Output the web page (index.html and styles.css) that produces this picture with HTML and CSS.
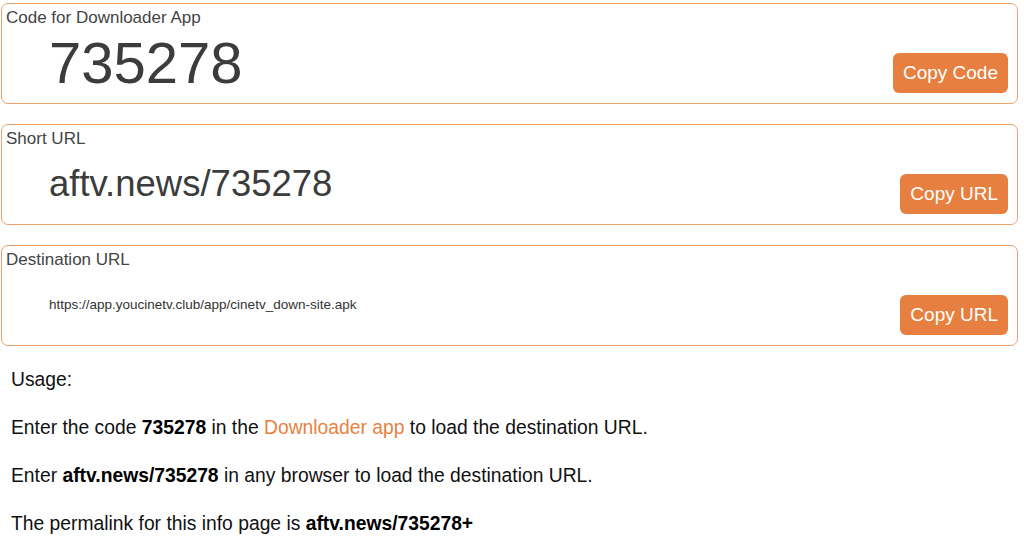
FILE: index.html
```html
<!DOCTYPE html>
<html lang="en">
<head>
<meta charset="utf-8">
<title>aftv.news/735278</title>
<link rel="stylesheet" href="styles.css">
</head>
<body>
<main class="page">
  <section class="box">
    <div class="label">Code for Downloader App</div>
    <div class="row">
      <div class="value value-code">735278</div>
      <button class="btn" type="button">Copy Code</button>
    </div>
  </section>
  <section class="box">
    <div class="label">Short URL</div>
    <div class="row">
      <div class="value value-short">aftv.news/735278</div>
      <button class="btn" type="button">Copy URL</button>
    </div>
  </section>
  <section class="box">
    <div class="label">Destination URL</div>
    <div class="row">
      <div class="value value-dest">https://app.youcinetv.club/app/cinetv_down-site.apk</div>
      <button class="btn" type="button">Copy URL</button>
    </div>
  </section>
  <div class="usage">
    <p>Usage:</p>
    <p>Enter the code <strong>735278</strong> in the <a class="link" href="#">Downloader app</a> to load the destination URL.</p>
    <p>Enter <strong>aftv.news/735278</strong> in any browser to load the destination URL.</p>
    <p>The permalink for this info page is <strong>aftv.news/735278+</strong></p>
  </div>
</main>
</body>
</html>
```

FILE: styles.css
```css
html, body {
  margin: 0;
  padding: 0;
  background: #ffffff;
}

body {
  font-family: "Liberation Sans", Arial, Helvetica, sans-serif;
  color: #111;
}

.page {
  padding: 3px 6px 0 1px;
  display: flex;
  flex-direction: column;
  gap: 20px;
}

.box {
  box-sizing: border-box;
  height: 101px;
  border: 1px solid #f0a06c;
  border-radius: 7px;
  padding: 6px 9px 10px 4px;
  display: flex;
  flex-direction: column;
}

.label {
  font-size: 17px;
  line-height: 16px;
  color: #444;
}

.row {
  flex: 1;
  display: flex;
  justify-content: space-between;
  align-items: flex-end;
}

.value {
  align-self: center;
  padding-top: 7px;
  margin-left: 43px;
  line-height: 1;
  color: #3c3c3c;
}

.value-code {
  font-size: 58px;
}

.value-short {
  font-size: 36.5px;
}

.value-dest {
  font-size: 13.5px;
  color: #333;
}

.btn {
  height: 40px;
  padding: 0 10px;
  border: none;
  border-radius: 6px;
  background: #e67f3f;
  color: #fff;
  font-family: "Liberation Sans", Arial, Helvetica, sans-serif;
  font-size: 19px;
  line-height: 40px;
  cursor: pointer;
}

.usage {
  padding-left: 10px;
  font-size: 19.3px;
  line-height: 28px;
  color: #111;
}

.usage p {
  margin: 0 0 20px 0;
}

.usage strong {
  font-weight: bold;
  color: #000;
}

.link {
  color: #e8813f;
  text-decoration: none;
}
```
